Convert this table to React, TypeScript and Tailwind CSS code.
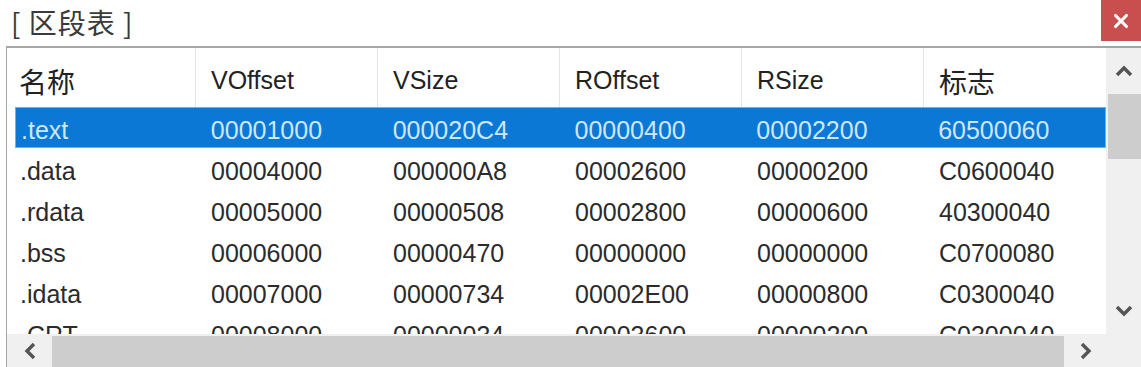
import { X } from "lucide-react"

const cols = ["名称", "VOffset", "VSize", "ROffset", "RSize", "标志"]

const rows = [
  [".text", "00001000", "000020C4", "00000400", "00002200", "60500060"],
  [".data", "00004000", "000000A8", "00002600", "00000200", "C0600040"],
  [".rdata", "00005000", "00000508", "00002800", "00000600", "40300040"],
  [".bss", "00006000", "00000470", "00000000", "00000000", "C0700080"],
  [".idata", "00007000", "00000734", "00002E00", "00000800", "C0300040"],
  [".CRT", "00008000", "00000034", "00003600", "00000200", "C0300040"],
]

const widths = ["w-[189px]", "w-[182px]", "w-[182px]", "w-[182px]", "w-[182px]", "w-[182px]"]

// scrollbar arrow, drawn pointing up and rotated
function Arrow({ rot }: { rot: string }) {
  return (
    <svg width="18" height="18" viewBox="0 0 18 18" className={rot}>
      <polyline points="2,13 9,6 16,13" fill="none" stroke="#555555" strokeWidth="3.4" />
    </svg>
  )
}

function SectionTable() {
  return (
    <div className="w-[1141px] h-[367px] bg-white overflow-hidden font-['Liberation_Sans','Noto_Sans_CJK_SC',sans-serif] text-[#2b2b2b]">
      <div className="flex justify-between h-[46px]">
        <div className="pl-[11px] pt-[1px] text-[28px] text-[#3a3a3a] font-['Noto_Sans_CJK_SC',sans-serif] tracking-[1px]">[ 区段表 ]</div>
        <button className="w-[40px] h-[41px] bg-[#c94f4f] flex items-center justify-center">
          <X size={22} strokeWidth={3.4} color="#ffffff" />
        </button>
      </div>
      <div className="ml-[6px] h-[321px] border-t-2 border-l border-[#a6a6a6] flex flex-col">
        <div className="flex h-[286px]">
          <div className="flex-1 overflow-hidden">
            <div className="flex h-[59px] items-center">
              {cols.map((c, i) => (
                <div
                  key={c}
                  className={`${widths[i]} h-full flex items-center pt-[6px] ${i === 5 ? "" : "border-r border-[#e5e5e5]"} ${i === 0 ? "pl-[12px]" : "pl-[15px]"} ${i === 0 || i === 5 ? "text-[28px] font-['Noto_Sans_CJK_SC',sans-serif] text-[#222]" : "text-[25px] text-[#222]"}`}
                >
                  {c}
                </div>
              ))}
            </div>
            {rows.map((r, ri) => (
              <div
                key={r[0]}
                className={`flex h-[41px] items-center pt-[7px] text-[25px] ${ri === 0 ? "bg-[#0a78d4] text-[#cfe6fb] border border-[#6cb0ea] ml-[8px] w-[1091px]" : ""}`}
              >
                {r.map((v, i) => (
                  <div key={i} className={`${i === 0 ? (ri === 0 ? "w-[180px] pl-[5px]" : "w-[189px] pl-[13px]") : "w-[182px] pl-[15px]"} whitespace-nowrap`}>
                    {v}
                  </div>
                ))}
              </div>
            ))}
          </div>
          <div className="w-[35px] bg-[#f0f0f0] flex flex-col items-center">
            <div className="h-[46px] w-full flex items-center justify-center">
              <Arrow rot="" />
            </div>
            <div className="h-[65px] w-[33px] ml-[2px] bg-[#cdcdcd]" />
            <div className="flex-1" />
            <div className="h-[46px] w-full flex items-center justify-center">
              <Arrow rot="rotate-180" />
            </div>
          </div>
        </div>
        <div className="flex h-[33px] bg-[#f0f0f0]">
          <div className="w-[45px] flex items-center justify-center">
            <Arrow rot="-rotate-90" />
          </div>
          <div className="w-[1012px] mt-[2px] bg-[#cdcdcd]" />
          <div className="w-[43px] flex items-center justify-center">
            <Arrow rot="rotate-90" />
          </div>
          <div className="flex-1" />
        </div>
      </div>
    </div>
  )
}

export default function App() {
  return <SectionTable />
}
